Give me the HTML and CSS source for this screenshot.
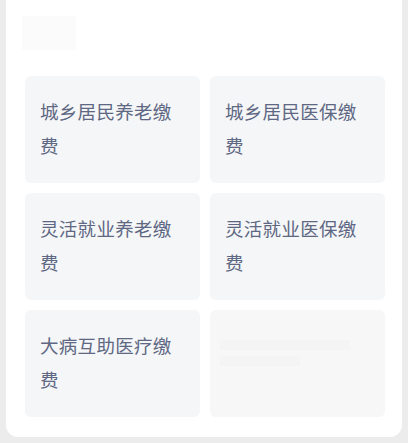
FILE: index.html
```html
<!DOCTYPE html>
<html lang="zh">
<head>
<meta charset="utf-8">
<link rel="stylesheet" href="styles.css">
</head>
<body>
<div class="card">
  <div class="head"><div class="ghost"></div></div>
  <div class="grid">
    <div class="tile">城乡居民养老缴费</div>
    <div class="tile">城乡居民医保缴费</div>
    <div class="tile">灵活就业养老缴费</div>
    <div class="tile">灵活就业医保缴费</div>
    <div class="tile">大病互助医疗缴费</div>
    <div class="tile blank"><div class="bar"></div><div class="bar short"></div></div>
  </div>
</div>
</body>
</html>
```
FILE: styles.css
```css
html, body { margin: 0; padding: 0; }
body {
  background: #ececec;
  width: 408px;
  height: 443px;
  font-family: "Noto Sans CJK SC", "Noto Sans", sans-serif;
  overflow: hidden;
}
.card {
  margin: 0 6px;
  background: #fff;
  height: 437px;
  border-radius: 0 0 12px 12px;
  box-sizing: border-box;
  padding: 0 18px 0 19px;
}
.head {
  height: 76px;
  padding-top: 16px;
  box-sizing: border-box;
}
.ghost {
  width: 54px;
  height: 34px;
  margin-left: -3px;
  background: #fbfbfb;
}
.grid {
  display: grid;
  grid-template-columns: 175px 175px;
  column-gap: 10px;
  row-gap: 10px;
}
.tile {
  background: #f5f6f8;
  border-radius: 6px;
  height: 107px;
  box-sizing: border-box;
  padding: 18px 14px 0 15px;
  font-size: 18.5px;
  line-height: 34px;
  color: #5e6883;
  letter-spacing: 0.3px;
}
.tile.blank {
  background: #f7f7f7;
  padding: 30px 10px 0 10px;
}
.bar {
  height: 10px;
  width: 130px;
  background: #f4f4f4;
  margin-bottom: 6px;
}
.bar.short { width: 80px; }
```
